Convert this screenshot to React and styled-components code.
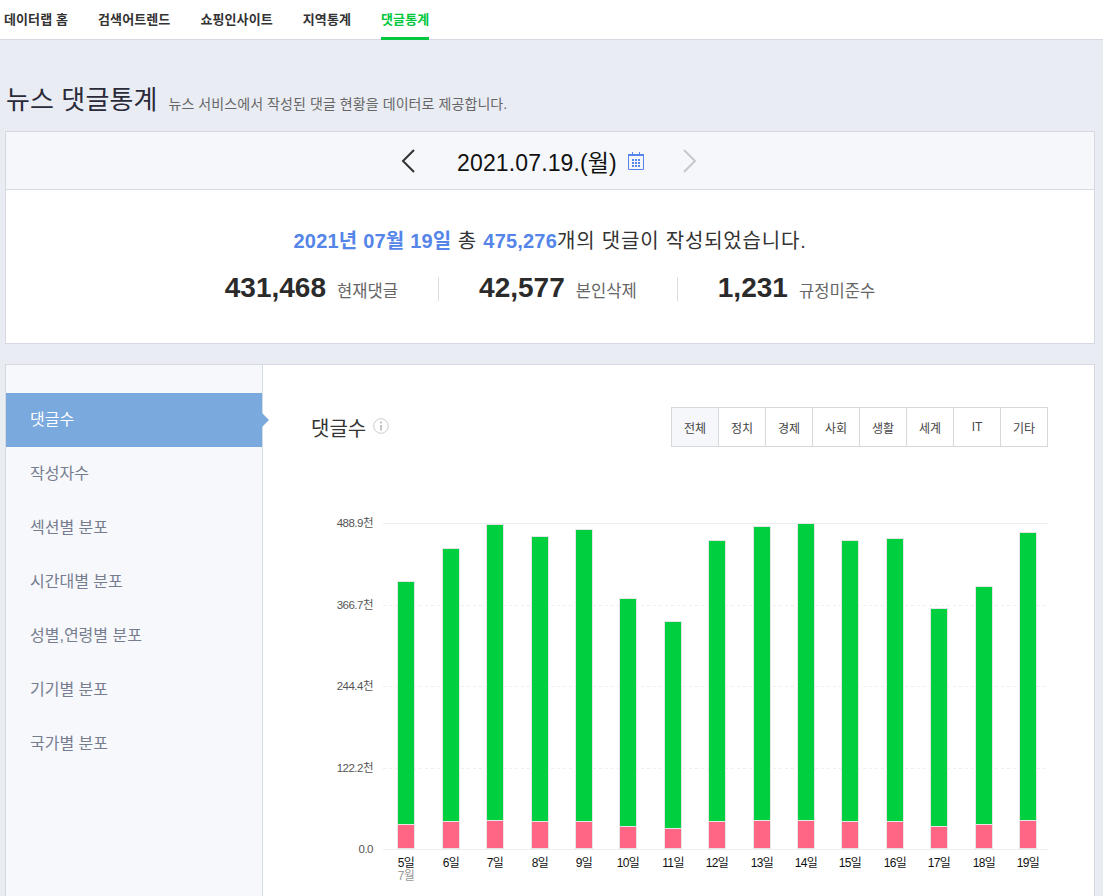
import React from "react";
import styled, { createGlobalStyle } from "styled-components";

const GlobalStyle = createGlobalStyle`
  html, body { margin: 0; padding: 0; height: 896px; overflow: hidden; background: #e9ecf3; }
  body { font-family: "Liberation Sans", "Noto Sans CJK KR", sans-serif; color: #222; }
  * { box-sizing: border-box; }
`;

const Nav = styled.nav`
  display: flex;
  gap: 30px;
  height: 40px;
  padding-left: 4px;
  background: #fff;
  border-bottom: 1px solid #d6d9df;
`;

const NavItem = styled.a`
  height: 40px;
  line-height: 39px;
  font-size: 13px;
  font-weight: 700;
  letter-spacing: 0.1px;
  color: ${p => (p.$active ? "#00c73c" : "#333")};
  border-bottom: ${p => (p.$active ? "3px solid #00c73c" : "none")};
`;

const Page = styled.div`
  padding: 0 8px 0 5px;
`;

const Heading = styled.div`
  display: flex;
  align-items: baseline;
  height: 91px;
  padding: 42px 0 0 1px;
`;

const Title = styled.h1`
  margin: 0;
  font-size: 26px;
  line-height: 36px;
  font-weight: 400;
  color: #2a2a3a;
  letter-spacing: 0.1px;
`;

const Sub = styled.span`
  margin-left: 11px;
  font-size: 14px;
  color: #666;
  letter-spacing: 0.08px;
`;

const Card = styled.section`
  height: 213px;
  background: #fff;
  border: 1px solid #d6d9e2;
`;

const DateBar = styled.div`
  display: flex;
  align-items: center;
  justify-content: center;
  height: 58px;
  padding-right: 2px;
  background: #f5f7fb;
  border-bottom: 1px solid #d6d9e2;
`;

const DateText = styled.strong`
  margin: 0 11px 0 41px;
  font-size: 23px;
  font-weight: 400;
  letter-spacing: 0.13px;
  color: #111;
`;

const Arrow = styled.svg`
  display: block;
  width: 16px;
  height: 26px;
  margin-left: ${p => p.$left || 0}px;
  fill: none;
  stroke: ${p => p.$color};
  stroke-width: 2;
`;

const Summary = styled.p`
  margin: 36px 0 0;
  text-align: center;
  font-size: 20px;
  line-height: 30px;
  letter-spacing: 0.8px;
  color: #333;
`;

const Blue = styled.b`
  letter-spacing: 0.2px;
  color: #5585e8;
`;

const Stats = styled.div`
  display: flex;
  justify-content: center;
  margin-top: 21px;
`;

const Stat = styled.div`
  display: flex;
  align-items: baseline;
  height: 24px;
  padding: 0 40px;
  border-left: ${p => (p.$first ? "none" : "1px solid #ddd")};
`;

const StatValue = styled.b`
  font-size: 28px;
  line-height: 22px;
  color: #2b2b2b;
`;

const StatLabel = styled.span`
  margin-left: 11px;
  font-size: 16.6px;
  color: #666;
`;

const Panel = styled.section`
  display: flex;
  height: 540px;
  margin-top: 20px;
  background: #fff;
  border: 1px solid #d6d9e2;
`;

const Side = styled.ul`
  flex: 0 0 257px;
  margin: 0;
  padding: 28px 0 0;
  list-style: none;
  background: #f7f8fc;
  border-right: 1px solid #d3dde8;
`;

const SideItem = styled.li`
  position: relative;
  height: 54px;
  padding-left: 24px;
  line-height: 53px;
  font-size: 16px;
  color: ${p => (p.$active ? "#fff" : "#767d8f")};
  background: ${p => (p.$active ? "#7aa9de" : "transparent")};

  ${p =>
    p.$active &&
    `&::after {
      content: "";
      position: absolute;
      top: 20px;
      right: -7px;
      border-left: 7px solid #7aa9de;
      border-top: 7px solid transparent;
      border-bottom: 7px solid transparent;
    }`}
`;

const Main = styled.div`
  flex: 1;
  padding: 42px 46px 0 48px;
`;

const MainHead = styled.div`
  display: flex;
  align-items: center;
  height: 40px;
`;

const MainTitle = styled.h2`
  margin: 0;
  font-size: 20px;
  font-weight: 400;
  color: #333;
`;

const Info = styled.svg`
  display: block;
  width: 16px;
  height: 16px;
  margin: 0 0 3px 7px;
`;

const Tabs = styled.div`
  display: flex;
  margin-left: auto;
  border: 1px solid #d8d8dc;
`;

const Tab = styled.button`
  width: ${p => (p.$active ? 46 : 47)}px;
  height: 38px;
  padding: 0;
  font: inherit;
  font-size: 12px;
  color: #444;
  background: ${p => (p.$active ? "#f5f7fb" : "#fff")};
  border: 0;
  border-left: ${p => (p.$active ? "0" : "1px solid #d8d8dc")};
`;

const Chart = styled.svg`
  display: block;
  width: 737px;
  height: 386px;
  margin-top: 63px;
`;

const menu = ["댓글수", "작성자수", "섹션별 분포", "시간대별 분포", "성별,연령별 분포", "기기별 분포", "국가별 분포"];
const tabs = ["전체", "정치", "경제", "사회", "생활", "세계", "IT", "기타"];
const ticks = [
  { y: 523, label: "488.9천", solid: true },
  { y: 605, label: "366.7천" },
  { y: 686, label: "244.4천" },
  { y: 768, label: "122.2천" },
  { y: 849, label: "0.0", solid: true },
];
const bars = [
  { d: 5, x: 398, top: 582, pink: 825 },
  { d: 6, x: 443, top: 549, pink: 822 },
  { d: 7, x: 487, top: 525, pink: 821 },
  { d: 8, x: 532, top: 537, pink: 822 },
  { d: 9, x: 576, top: 530, pink: 822 },
  { d: 10, x: 620, top: 599, pink: 827 },
  { d: 11, x: 665, top: 622, pink: 829 },
  { d: 12, x: 709, top: 541, pink: 822 },
  { d: 13, x: 754, top: 527, pink: 821 },
  { d: 14, x: 798, top: 524, pink: 821 },
  { d: 15, x: 842, top: 541, pink: 822 },
  { d: 16, x: 887, top: 539, pink: 822 },
  { d: 17, x: 931, top: 609, pink: 827 },
  { d: 18, x: 976, top: 587, pink: 825 },
  { d: 19, x: 1020, top: 533, pink: 821 },
];

const App = () => {
  return (
    <>
      <GlobalStyle />
      <Nav>
        <NavItem>데이터랩 홈</NavItem>
        <NavItem>검색어트렌드</NavItem>
        <NavItem>쇼핑인사이트</NavItem>
        <NavItem>지역통계</NavItem>
        <NavItem $active>댓글통계</NavItem>
      </Nav>
      <Page>
        <Heading>
          <Title>뉴스 댓글통계</Title>
          <Sub>뉴스 서비스에서 작성된 댓글 현황을 데이터로 제공합니다.</Sub>
        </Heading>
        <Card>
          <DateBar>
            <Arrow viewBox="0 0 16 26" $color="#333">
              <path d="M14 2 3 13l11 11" />
            </Arrow>
            <DateText>2021.07.19.(월)</DateText>
            <svg width="16" height="18" viewBox="0 0 16 18">
              <path d="M.5 2.5h15v15H.5z" fill="none" stroke="#5585e8" />
              <path d="M0 2h16v2H0zM4 0h1v3H4zM11 0h1v3h-1z" fill="#5585e8" />
              <path d="M4 7h2v2H4zM7 7h2v2H7zM10 7h2v2h-2zM4 10h2v2H4zM7 10h2v2H7zM10 10h2v2h-2zM4 13h2v2H4zM7 13h2v2H7zM10 13h2v2h-2z" fill="#5585e8" />
            </svg>
            <Arrow viewBox="0 0 16 26" $color="#c8c8cc" $left={38}>
              <path d="M2 2l11 11L2 24" />
            </Arrow>
          </DateBar>
          <Summary>
            <Blue>2021년 07월 19일</Blue> 총 <Blue>475,276</Blue>개의 댓글이 작성되었습니다.
          </Summary>
          <Stats>
            <Stat $first>
              <StatValue>431,468</StatValue>
              <StatLabel>현재댓글</StatLabel>
            </Stat>
            <Stat>
              <StatValue>42,577</StatValue>
              <StatLabel>본인삭제</StatLabel>
            </Stat>
            <Stat>
              <StatValue>1,231</StatValue>
              <StatLabel>규정미준수</StatLabel>
            </Stat>
          </Stats>
        </Card>
        <Panel>
          <Side>
            {menu.map((m, i) => (
              <SideItem key={m} $active={i === 0}>
                {m}
              </SideItem>
            ))}
          </Side>
          <Main>
            <MainHead>
              <MainTitle>댓글수</MainTitle>
              <Info viewBox="0 0 16 16">
                <circle cx="8" cy="8" r="7.3" fill="none" stroke="#ccc" />
                <path d="M7 3.5h2v2H7zM7 7h2v5.5H7z" fill="#c4c4c4" />
              </Info>
              <Tabs>
                {tabs.map((t, i) => (
                  <Tab key={t} $active={i === 0}>
                    {t}
                  </Tab>
                ))}
              </Tabs>
            </MainHead>
            <Chart viewBox="311 510 737 386">
              {ticks.map(t => (
                <g key={t.y}>
                  <line
                    x1="383"
                    x2="1048"
                    y1={t.y + 0.5}
                    y2={t.y + 0.5}
                    stroke="#eeeeee"
                    strokeDasharray={t.solid ? undefined : "3 3"}
                  />
                  <text x="373" y={t.y + 4} textAnchor="end" fontSize="11.5" letterSpacing="-0.5" fill="#555">
                    {t.label}
                  </text>
                </g>
              ))}
              {bars.map(b => (
                <g key={b.d}>
                  <rect x={b.x - 1} y={b.top - 1} width="18" height={850 - b.top} fill="#e6e6e6" />
                  <rect x={b.x} y={b.top} width="16" height={b.pink - b.top - 1} fill="#00d03f" />
                  <rect x={b.x} y={b.pink} width="16" height={848 - b.pink} fill="#ff6685" />
                  <text x={b.x + 8} y="867" textAnchor="middle" fontSize="12" letterSpacing="-0.6" fill="#111">
                    {b.d}일
                  </text>
                </g>
              ))}
              <text x="406" y="880" textAnchor="middle" fontSize="12" letterSpacing="-0.6" fill="#999">
                7월
              </text>
            </Chart>
          </Main>
        </Panel>
      </Page>
    </>
  );
};

export default App;
